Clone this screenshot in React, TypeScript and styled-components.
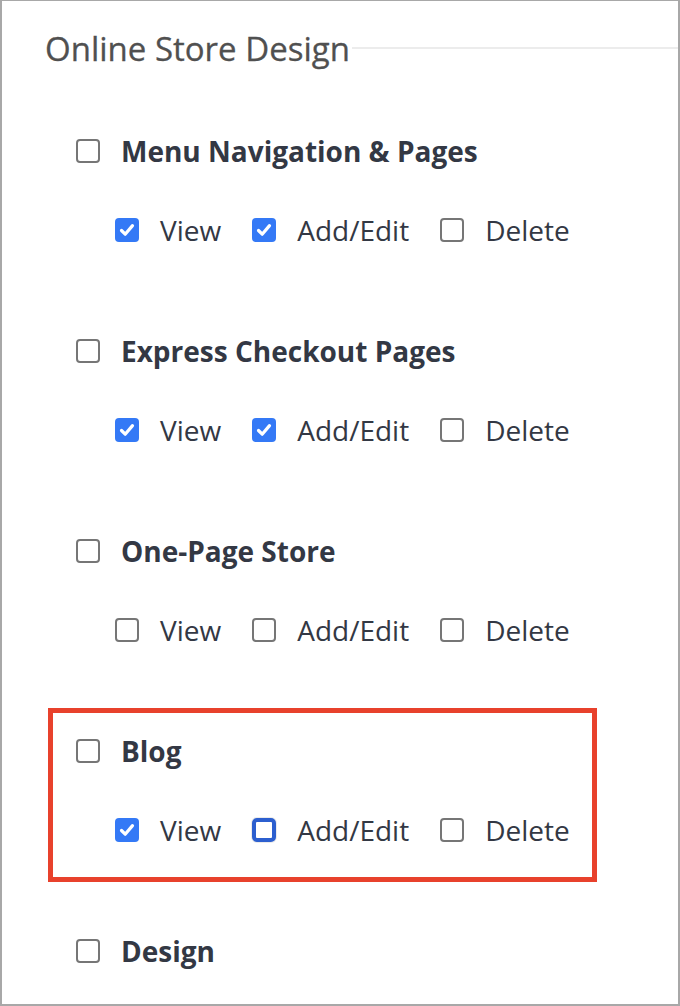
import React from "react";
import styled, { createGlobalStyle, css } from "styled-components";

const Global = createGlobalStyle`
  html, body { margin: 0; padding: 0; background: #fff; }
  body { font-family: "Open Sans", "Liberation Sans", sans-serif; }
  *, *::before, *::after { box-sizing: border-box; }
`;

const Frame = styled.div`
  width: 680px;
  height: 1006px;
  border: 2px solid #a8a8a8;
  border-top-width: 1px;
  background: #fff;
  overflow: hidden;
  display: flex;
  flex-direction: column;
`;

const HeadingRow = styled.div`
  display: flex;
  align-items: center;
  gap: 2px;
  height: 44px;
  margin-top: 26px;
  padding-left: 43px;
`;

const Heading = styled.h2`
  margin: 0;
  font-size: 33px;
  font-weight: 400;
  color: #505050;
  white-space: nowrap;
  line-height: 44px;
  -webkit-text-stroke: 0.3px #505050;
`;

const Rule = styled.div`
  flex: 1;
  height: 2px;
  margin-top: -2px;
  background: #ececec;
`;

const List = styled.div`
  display: flex;
  flex-direction: column;
  gap: 81px;
  margin-top: 60px;
  padding-left: 74px;
`;

const Group = styled.div<{ $highlight?: boolean }>`
  position: relative;
  display: flex;
  flex-direction: column;
  gap: 39px;
  ${(p) =>
    p.$highlight &&
    css`
      &::after {
        content: "";
        position: absolute;
        left: -28px;
        top: -23px;
        width: 549px;
        height: 174px;
        border: 5px solid #e8412c;
        pointer-events: none;
      }
    `}
`;

const Row = styled.div`
  display: flex;
  align-items: center;
  height: 40px;
  gap: 21px;
`;

const SubRow = styled.div`
  display: flex;
  align-items: center;
  height: 40px;
  padding-left: 39px;
  gap: 31px;
`;

const Option = styled.label`
  display: flex;
  align-items: center;
  gap: 21px;
`;

const Title = styled.span`
  font-size: 28px;
  font-weight: 700;
  color: #333844;
`;

const OptText = styled.span`
  font-size: 28px;
  font-weight: 400;
  color: #333844;
`;

type BoxState = "off" | "on" | "focus";

const Box = styled.span<{ $state: BoxState }>`
  width: 24px;
  height: 24px;
  flex: none;
  border-radius: 4px;
  display: flex;
  align-items: center;
  justify-content: center;
  ${(p) =>
    p.$state === "on"
      ? css`
          background: #3479f6;
        `
      : p.$state === "focus"
      ? css`
          border: 4px solid #2c5fcf;
          border-radius: 5px;
          background: #fff;
          box-shadow: 0 0 0 1px rgba(0, 0, 0, 0.08);
        `
      : css`
          border: 2px solid #767676;
          background: #fff;
        `}
`;

const Check = () => (
  <svg width="18" height="18" viewBox="0 0 18 18">
    <path
      d="M3.5 9.5 L7.2 13.2 L14.5 4.6"
      fill="none"
      stroke="#fff"
      strokeWidth="3.2"
      strokeLinecap="round"
      strokeLinejoin="round"
    />
  </svg>
);

const CheckBox = ({ state }: { state: BoxState }) => (
  <Box $state={state}>{state === "on" ? <Check /> : null}</Box>
);

type Item = {
  title: string;
  opts?: [BoxState, BoxState, BoxState];
  highlight?: boolean;
};

const items: Item[] = [
  { title: "Menu Navigation & Pages", opts: ["on", "on", "off"] },
  { title: "Express Checkout Pages", opts: ["on", "on", "off"] },
  { title: "One-Page Store", opts: ["off", "off", "off"] },
  { title: "Blog", opts: ["on", "focus", "off"], highlight: true },
  { title: "Design" },
];

const labels = ["View", "Add/Edit", "Delete"];

export default function App() {
  return (
    <>
      <Global />
      <Frame>
        <HeadingRow>
          <Heading>Online Store Design</Heading>
          <Rule />
        </HeadingRow>
        <List>
          {items.map((it) => (
            <Group key={it.title} $highlight={it.highlight}>
              <Row>
                <CheckBox state="off" />
                <Title>{it.title}</Title>
              </Row>
              {it.opts && (
                <SubRow>
                  {it.opts.map((s, i) => (
                    <Option key={labels[i]}>
                      <CheckBox state={s} />
                      <OptText>{labels[i]}</OptText>
                    </Option>
                  ))}
                </SubRow>
              )}
            </Group>
          ))}
        </List>
      </Frame>
    </>
  );
}
